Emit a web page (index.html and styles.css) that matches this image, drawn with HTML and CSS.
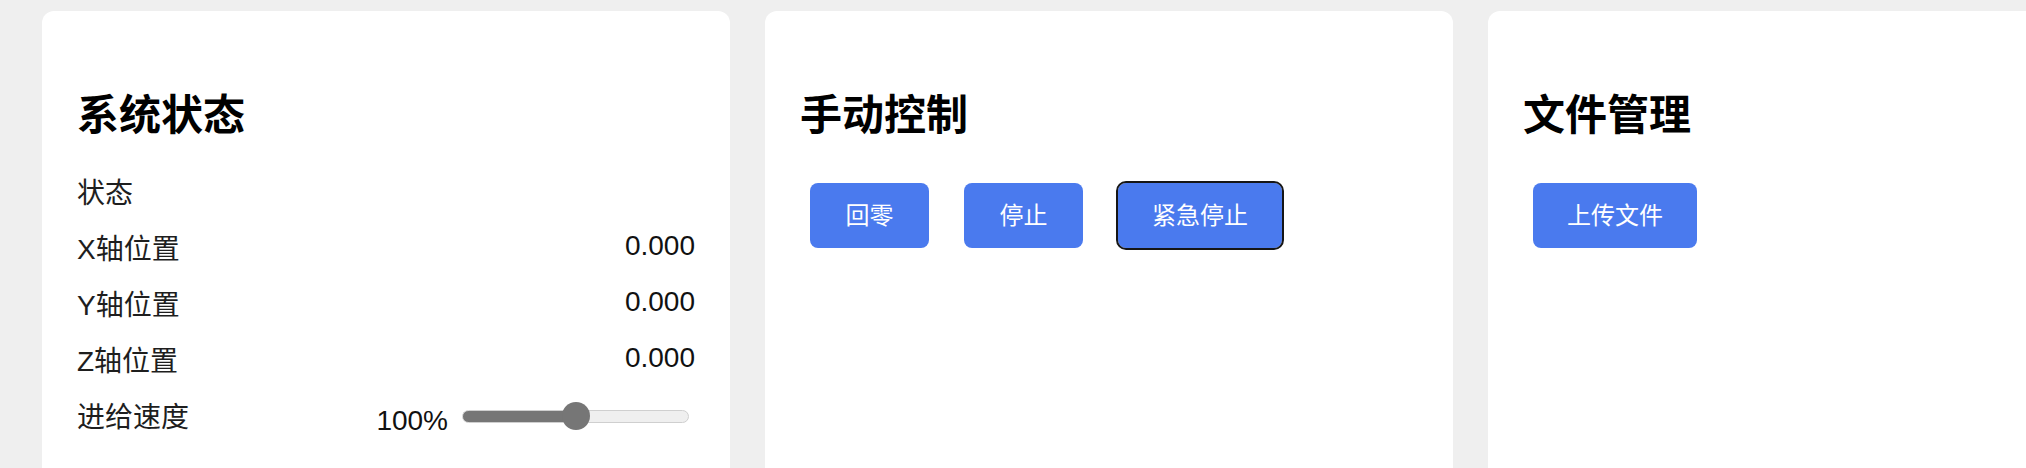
FILE: index.html
```html
<!DOCTYPE html>
<html lang="zh-CN">
<head>
<meta charset="utf-8">
<title>控制面板</title>
<link rel="stylesheet" href="styles.css">
</head>
<body>
<main class="dashboard">
  <section class="card">
    <h2 class="card-title">系统状态</h2>
    <div class="stat-row"><span class="stat-label">状态</span><span class="stat-value"></span></div>
    <div class="stat-row"><span class="stat-label">X轴位置</span><span class="stat-value">0.000</span></div>
    <div class="stat-row"><span class="stat-label">Y轴位置</span><span class="stat-value">0.000</span></div>
    <div class="stat-row"><span class="stat-label">Z轴位置</span><span class="stat-value">0.000</span></div>
    <div class="stat-row">
      <span class="stat-label">进给速度</span>
      <div class="feed">
        <span class="feed-value">100%</span>
        <input class="feed-slider" type="range" min="0" max="200" value="100">
      </div>
    </div>
  </section>
  <section class="card">
    <h2 class="card-title">手动控制</h2>
    <div class="btn-row">
      <button class="btn">回零</button>
      <button class="btn">停止</button>
      <button class="btn btn-focused">紧急停止</button>
    </div>
  </section>
  <section class="card">
    <h2 class="card-title">文件管理</h2>
    <div class="btn-row">
      <button class="btn">上传文件</button>
    </div>
  </section>
</main>
</body>
</html>
```

FILE: styles.css
```css
html, body {
  margin: 0;
  padding: 0;
  overflow: hidden;
  background: #efefef;
}

body {
  font-family: "Liberation Sans", "Noto Sans CJK SC", sans-serif;
  font-size: 28px;
  color: #1e1e1e;
}

.dashboard {
  display: grid;
  grid-template-columns: repeat(3, 688px);
  column-gap: 35px;
  padding: 11px 0 0 42px;
}

.card {
  background: #ffffff;
  border-radius: 12px;
  padding: 0 35px 35px;
  min-height: 480px;
  box-sizing: border-box;
}

.card-title {
  margin: 75px 0 20px;
  font-size: 42px;
  line-height: 60px;
  font-weight: bold;
  color: #000;
}

.stat-row {
  display: flex;
  justify-content: space-between;
  align-items: flex-start;
  padding: 7px 0;
}

.stat-label {
  line-height: 42px;
  color: #1e1e1e;
}

.stat-value {
  line-height: 34px;
  color: #111;
}

.feed {
  display: flex;
  align-items: flex-start;
  gap: 14px;
}

.feed-value {
  line-height: 34px;
  padding-top: 7px;
  color: #111;
}

.feed-slider {
  -webkit-appearance: none;
  appearance: none;
  width: 227px;
  height: 28px;
  margin: 5px 6px 0 0;
  padding: 0;
  background: transparent;
}

.feed-slider::-webkit-slider-runnable-track {
  box-sizing: border-box;
  height: 13px;
  border-radius: 7px;
  border: 1px solid #cfcfcf;
  background: linear-gradient(to right, #767676 0, #767676 50%, #efefef 50%, #efefef 100%);
}

.feed-slider::-webkit-slider-thumb {
  -webkit-appearance: none;
  appearance: none;
  width: 28px;
  height: 28px;
  border-radius: 50%;
  background: #767676;
  border: none;
  margin-top: -8.5px;
}

.btn-row {
  display: flex;
  gap: 35px;
  padding: 17px 0 0 10px;
}

.btn {
  font-family: "Liberation Sans", "Noto Sans CJK SC", sans-serif;
  font-size: 24px;
  line-height: 30px;
  color: #ffffff;
  background: #4a7aee;
  border: none;
  border-radius: 8px;
  min-width: 119px;
  padding: 17.5px 34px;
  cursor: pointer;
}

.btn-focused {
  outline: 2px solid #161616;
  outline-offset: 0;
}
```
